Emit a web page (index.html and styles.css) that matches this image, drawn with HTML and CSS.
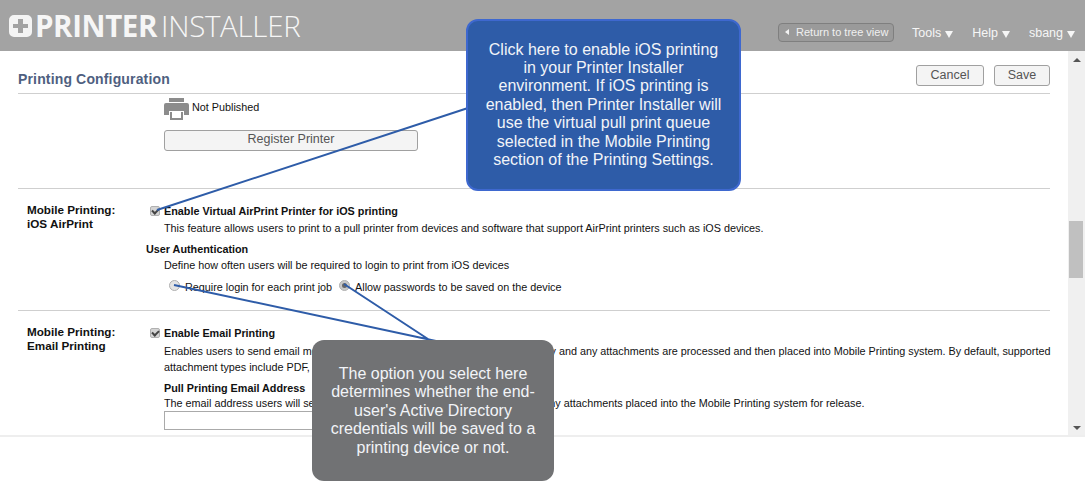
FILE: index.html
```html
<!DOCTYPE html>
<html lang="en">
<head>
<meta charset="utf-8">
<title>Printer Installer</title>
<link rel="stylesheet" href="styles.css">
</head>
<body>
<header class="topbar">
  <div class="logo">
    <svg class="logo-mark" width="23" height="22" viewBox="0 0 23 22"><path fill-rule="evenodd" fill="#f4f4f4" d="M5 0H18a5 5 0 0 1 5 5V17a5 5 0 0 1-5 5H5a5 5 0 0 1-5-5V5a5 5 0 0 1 5-5ZM9 4V9H4V13H9V18H14V13H19V9H14V4Z"/></svg>
    <span class="logo-bold">PRINTER</span><span class="logo-light">INSTALLER</span>
  </div>
  <nav class="topnav">
    <a class="return-btn"><span class="return-arrow"></span>Return to tree view</a>
    <span class="menu">Tools<i class="caret"></i></span>
    <span class="menu">Help<i class="caret"></i></span>
    <span class="menu">sbang<i class="caret"></i></span>
  </nav>
</header>
<div class="pane">
  <main class="content">
    <div class="title-row">
      <h1>Printing Configuration</h1>
      <div class="actions"><button class="btn">Cancel</button><button class="btn btn-save">Save</button></div>
    </div>
    <section class="section section-first">
      <div class="label"></div>
      <div class="body indent">
        <div class="status">
          <svg width="25" height="22" viewBox="0 0 25 22"><path fill="#8c8c8c" d="M5 0H20V4H5ZM2 5H23a2 2 0 0 1 2 2V17H20V13H5V17H0V7a2 2 0 0 1 2-2ZM6 14H19V22H6Z"/><path fill="#fff" d="M8 14H17V20H8Z"/></svg>
          <span>Not Published</span>
        </div>
        <button class="btn register">Register Printer</button>
      </div>
    </section>
    <section class="section section-air">
      <div class="label">Mobile Printing:<br>iOS AirPrint</div>
      <div class="body">
        <label class="check"><input type="checkbox" checked><b>Enable Virtual AirPrint Printer for iOS printing</b></label>
        <p class="desc">This feature allows users to print to a pull printer from devices and software that support AirPrint printers such as iOS devices.</p>
        <h2 class="sub">User Authentication</h2>
        <p class="desc define">Define how often users will be required to login to print from iOS devices</p>
        <div class="radios">
          <label class="radio"><input type="radio" name="auth">Require login for each print job</label>
          <label class="radio"><input type="radio" name="auth" checked>Allow passwords to be saved on the device</label>
        </div>
      </div>
    </section>
    <section class="section section-email">
      <div class="label">Mobile Printing:<br>Email Printing</div>
      <div class="body">
        <label class="check"><input type="checkbox" checked><b>Enable Email Printing</b></label>
        <p class="desc long">Enables users to send email messages to a designated email address. Each body and any attachments are processed and then placed into Mobile Printing system. By default, supported attachment types include PDF, Microsoft Office documents and images.</p>
        <h2 class="sub sub-inner">Pull Printing Email Address</h2>
        <p class="desc address">The email address users will send all documents to. Their message's body and any attachments placed into the Mobile Printing system for release.</p>
        <input class="text-input" type="text" aria-label="Pull Printing Email Address">
      </div>
    </section>
  </main>
  <div class="scrollbar">
    <span class="sb-up"></span>
    <span class="sb-thumb"></span>
    <span class="sb-down"></span>
  </div>
</div>
<svg class="connectors" width="1085" height="492" viewBox="0 0 1085 492">
  <path d="M157 210 468 108M174 285 436 341M344 284 431 341" fill="none" stroke="#2e5ca8" stroke-width="2"/>
</svg>
<div class="callout callout-blue">Click here to enable iOS printing in your Printer Installer environment. If iOS printing is enabled, then Printer Installer will use the virtual pull print queue selected in the Mobile Printing section of the Printing Settings.</div>
<div class="callout callout-grey">The option you select here determines whether the end-user's Active Directory credentials will be saved to a printing device or not.</div>
</body>
</html>
```
FILE: styles.css
```css
* { box-sizing: border-box; }
html, body { margin: 0; height: 492px; overflow: hidden; background: #fff; }
body { position: relative; font: 10.8px/16px "Liberation Sans", Arial, sans-serif; color: #111; }

.topbar { height: 51px; background: #a3a3a3; display: flex; justify-content: space-between; color: #fff; }
.logo { display: flex; align-items: center; padding: 0 0 0 9px; height: 51px; font-family: "Open Sans", sans-serif; font-size: 29.5px; line-height: 1; color: #f6f6f6; }
.logo-mark { margin-right: 3px; }
.logo-bold { font-weight: 700; letter-spacing: -.4px; }
.logo-light { font-weight: 300; margin-left: 4px; letter-spacing: -.3px; }
.topnav { display: flex; align-items: flex-start; padding: 23px 10px 0 0; font-size: 12.5px; }
.return-btn { display: flex; align-items: center; width: 116px; height: 19px; margin-right: 18px; padding: 0 0 2px 6px; border: 1px solid #7f7f7f; border-radius: 4px; background: #9a9a9a; font-size: 11px; color: #f0f0f0; white-space: nowrap; }
.return-arrow { width: 0; height: 0; margin-right: 7px; border: 3px solid transparent; border-left: 0; border-right: 4px solid #f2f2f2; }
.menu { display: flex; align-items: center; margin: 1px 19px 0 0; line-height: 19px; color: #f6f6f6; white-space: nowrap; }
.menu:last-child { margin-right: 0; }
.caret { width: 0; height: 0; margin: 2px 0 0 4px; border-style: solid; border-width: 7px 4px 0; border-color: #f6f6f6 transparent transparent; }

.pane { display: flex; height: 386px; border-bottom: 2px solid #eeeeee; overflow: hidden; }
.content { width: 1068px; padding: 0 18px; overflow: hidden; flex: none; }

.title-row { display: flex; justify-content: space-between; align-items: flex-start; height: 43px; border-bottom: 1px solid #cfcfcf; padding-top: 14px; }
h1 { margin: 6px 0 0; font-size: 14px; line-height: 16px; font-weight: 700; color: #4f5f80; letter-spacing: .15px; }
.actions { display: flex; gap: 10px; }
.btn { height: 21px; padding: 0 0 2px; border: 1px solid #a0a0a0; border-radius: 3px; background: #f4f4f4; font: 12.5px/16px "Liberation Sans", Arial, sans-serif; color: #555; }
.actions .btn { width: 68px; }
.actions .btn-save { width: 56px; }

.section { display: grid; grid-template-columns: 128px 904px; border-bottom: 1px solid #cfcfcf; }
.label { padding-left: 9px; font-size: 11.7px; font-weight: 700; line-height: 14px; color: #111; }
.body { min-width: 0; }
.section-first { height: 95px; padding-top: 4px; }
.indent { padding-left: 18px; }
.status { display: flex; align-items: flex-start; gap: 3px; height: 22px; }
.status span { margin-top: 2px; line-height: 14px; }
.register { display: block; width: 254px; margin-top: 10px; padding-bottom: 4px; }

.section-air { height: 122px; padding-top: 14px; }
.section-email { padding-top: 14px; height: 130px; }
.check { display: flex; align-items: center; height: 16px; margin-left: 4px; }
.check input { appearance: none; display: flex; align-items: center; justify-content: center; width: 10px; height: 10px; margin: 0 4px 0 0; border: 1px solid #b0b0b0; border-radius: 2px; background: #d4d4d4; }
.check input::after { content: ""; width: 5px; height: 3px; margin-top: -2px; border-left: 2px solid #444; border-bottom: 2px solid #444; transform: rotate(-45deg); }
.check b { font-weight: 700; }
.desc { margin: 0 0 0 18px; line-height: 16px; }
.section-air .desc { margin-top: 1px; }
.sub { margin: 5px 0 0; font-size: inherit; line-height: 16px; font-weight: 700; }
.section-air .desc.define { margin-top: 0; }
.radios { display: flex; gap: 7px; margin: 6px 0 0 23px; }
.radio { display: flex; align-items: center; height: 16px; }
.radio input { appearance: none; display: flex; align-items: center; justify-content: center; width: 11px; height: 11px; margin: 0 5px 0 0; border: 1px solid #b0b0b0; border-radius: 50%; background: #e4e4e4; position: relative; top: -2px; }
.radio input:checked { background: #c8c8c8; }
.radio input:checked::after { content: ""; width: 5px; height: 5px; border-radius: 50%; background: #666; }
.desc.long { margin-top: 2px; margin-right: -6px; }
.sub-inner { margin: 5px 0 0 18px; }
.address { margin-top: -1px; }
.text-input { display: block; width: 300px; height: 19px; margin: 0 0 0 18px; border: 1px solid #aaa; padding: 0; background: #fff; }

.scrollbar { position: relative; width: 17px; flex: none; background: #f0f0f0; }
.sb-up, .sb-down { position: absolute; left: 5px; width: 0; height: 0; border: 4px solid transparent; }
.sb-up { top: 7px; border-top: 0; border-bottom: 4px solid #555; }
.sb-down { bottom: 5px; border-bottom: 0; border-top: 4px solid #555; }
.sb-thumb { position: absolute; left: 1px; top: 170px; width: 14px; height: 57px; background: #c0c0c0; }

.connectors { position: absolute; left: 0; top: 0; pointer-events: none; }
.callout { position: absolute; display: flex; align-items: center; justify-content: center; text-align: center; font-size: 16px; line-height: 18.4px; color: #f2f4f8; }
.callout-blue { left: 466px; top: 19px; width: 275px; height: 172px; padding: 0 14px; border: 2px solid #3e68cf; border-radius: 12px; background: #2e5ca8; }
.callout-grey { left: 312px; top: 340px; width: 242px; height: 141px; padding: 1px 16px 0; border-radius: 12px; background: #717274; }
```
